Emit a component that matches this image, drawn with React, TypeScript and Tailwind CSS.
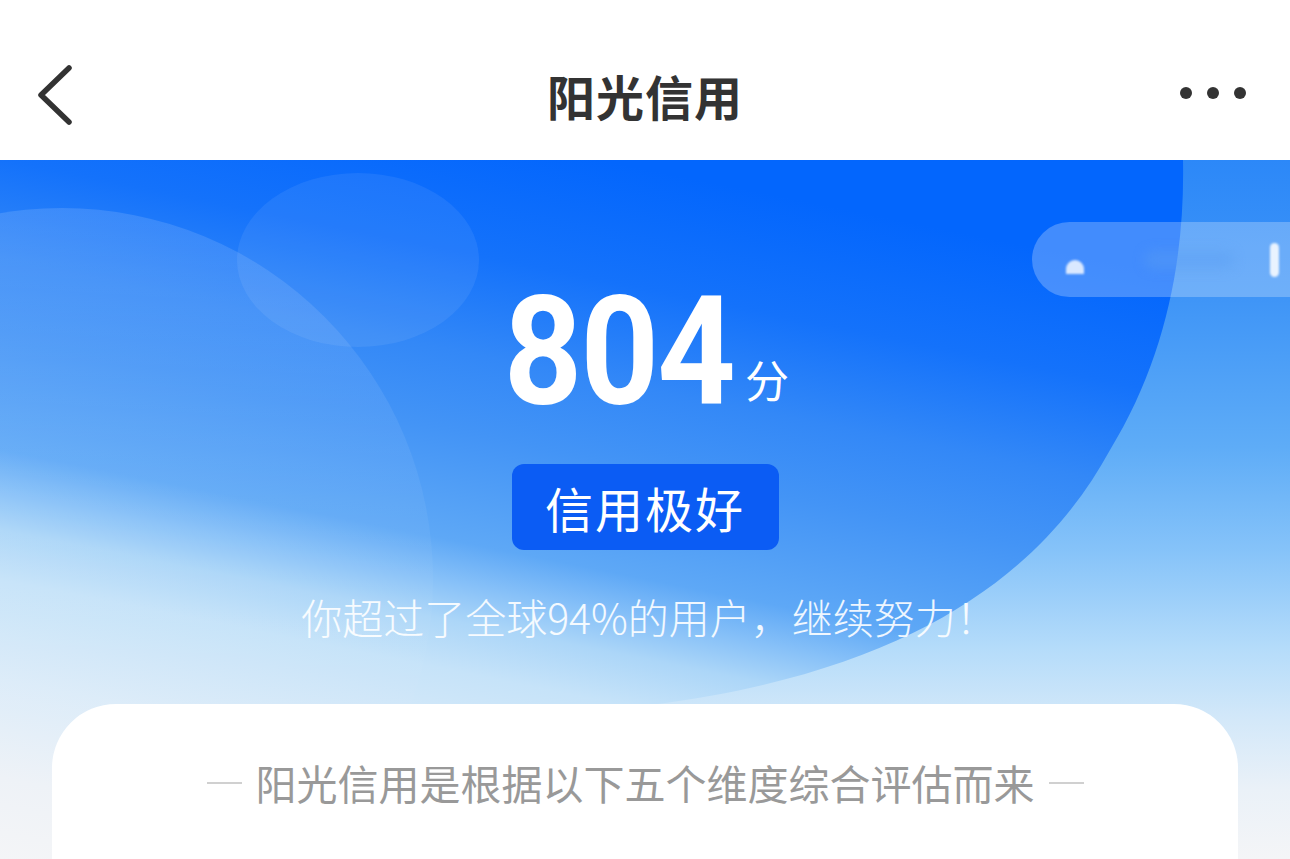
const cjk = "font-['Noto_Sans_CJK_SC','Noto_Sans',sans-serif]";

function Header() {
  return (
    <div className={`relative flex h-[160px] items-center justify-center bg-white pt-[30px] ${cjk}`}>
      <svg className="absolute left-[34px] top-[64px]" width="42" height="62" viewBox="0 0 42 62" fill="none">
        <polyline points="35,4 7,31 35,58" stroke="#333" strokeWidth="5.5" strokeLinecap="round" strokeLinejoin="round" />
      </svg>
      <h1 className="text-[48px] font-bold leading-none tracking-[1px] text-[#333]">阳光信用</h1>
      <div className="absolute right-[44px] top-[87px] flex gap-[15px]">
        <span className="h-[12px] w-[12px] rounded-full bg-[#333]" />
        <span className="h-[12px] w-[12px] rounded-full bg-[#333]" />
        <span className="h-[12px] w-[12px] rounded-full bg-[#333]" />
      </div>
    </div>
  );
}

// soft bubbles behind the score
function Backdrop() {
  return (
    <svg className="absolute inset-0" width="1290" height="699" viewBox="0 0 1290 699">
      <defs>
        <linearGradient id="big" x1="600" y1="0" x2="442" y2="788" gradientUnits="userSpaceOnUse">
          <stop offset="0" stopColor="#0366fd" />
          <stop offset="0.146" stopColor="#1472fb" />
          <stop offset="0.268" stopColor="#3388f7" />
          <stop offset="0.366" stopColor="#4394f6" />
          <stop offset="0.5" stopColor="#5ea8f6" />
          <stop offset="0.55" stopColor="#86c0f8" />
          <stop offset="0.598" stopColor="#acd6f8" />
          <stop offset="0.659" stopColor="#c6e3f9" />
          <stop offset="0.78" stopColor="#dcecf9" />
          <stop offset="0.9" stopColor="#eef2f7" />
          <stop offset="1" stopColor="#f4f5f7" />
        </linearGradient>
        <linearGradient id="left" x1="0" y1="0" x2="0" y2="1">
          <stop offset="0" stopColor="#ffffff" stopOpacity="0.13" />
          <stop offset="0.3" stopColor="#ffffff" stopOpacity="0.07" />
          <stop offset="0.6" stopColor="#ffffff" stopOpacity="0.02" />
          <stop offset="1" stopColor="#ffffff" stopOpacity="0" />
        </linearGradient>
      </defs>
      <path
        d="M0 0 L1183 0 C1185 100 1165 200 1110 290 C1050 400 930 510 650 545 L650 699 L0 699 Z"
        fill="url(#big)"
      />
      <circle cx="62" cy="419" r="371" fill="url(#left)" />
      <ellipse cx="358" cy="100" rx="121" ry="87" fill="#ffffff" fillOpacity="0.07" />
    </svg>
  );
}

function Hero() {
  return (
    <div className="relative h-[699px] overflow-hidden bg-[linear-gradient(180deg,#2c88f8_0%,#3f95f7_20%,#5eacf7_41%,#86c3f9_56%,#b5dcfa_70%,#d3e8f9_80%,#eaf1f8_90%,#f4f5f7_100%)]">
      <Backdrop />
      <div className="absolute left-[1032px] top-[62px] flex h-[75px] w-[300px] items-center rounded-full bg-white/25 pl-[34px]">
        <span className="mt-[14px] h-[14px] w-[18px] rounded-t-full bg-white/80 blur-[1px]" />
        <span className="ml-[60px] h-[18px] w-[90px] rounded-full bg-[#5b9df2]/40 blur-[6px]" />
        <span className="ml-[36px] h-[34px] w-[9px] rounded-full bg-white/85 blur-[1px]" />
      </div>

      <div className={`relative flex flex-col items-center ${cjk}`}>
        <div className="ml-[4px] mt-[116px] flex items-end text-white">
          <div className="flex w-[228px] justify-center">
            <span className="scale-x-[0.9] font-['Roboto',sans-serif] text-[152px] font-bold leading-none tracking-[-2px]">
              804
            </span>
          </div>
          <span className="mb-[27px] ml-[12px] text-[44px] leading-none">分</span>
        </div>
        <div className="mt-[36px] flex h-[86px] w-[267px] items-center justify-center rounded-[12px] bg-[#0b5cf4] text-[48px] leading-none tracking-[2px] text-white">
          信用极好
        </div>
        <p className="ml-[8px] mt-[46px] text-[41px] font-light leading-none text-white/90">你超过了全球94%的用户，继续努力！</p>
      </div>

      <div className={`absolute bottom-0 left-[52px] right-[52px] top-[544px] rounded-t-[64px] bg-white ${cjk}`}>
        <div className="mt-[58px] flex items-center justify-center gap-[14px]">
          <span className="h-[2px] w-[35px] bg-[#d0d0d0]" />
          <span className="text-[41px] leading-none text-[#999]">阳光信用是根据以下五个维度综合评估而来</span>
          <span className="h-[2px] w-[35px] bg-[#d0d0d0]" />
        </div>
      </div>
    </div>
  );
}

export default function App() {
  return (
    <div className="h-[859px] w-[1290px] overflow-hidden bg-[#f4f5f7]">
      <Header />
      <Hero />
    </div>
  );
}
